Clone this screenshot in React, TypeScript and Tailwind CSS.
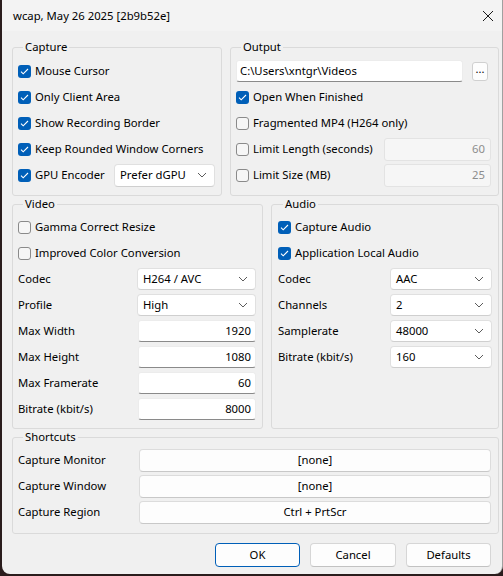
import React from "react";

function Chevron() {
  return (
    <svg width="10" height="6" viewBox="0 0 10 6" fill="none">
      <path d="M1 1l4 4 4-4" stroke="#5c5c5c" strokeWidth="1" />
    </svg>
  );
}

function Check({ checked, label }: { checked?: boolean; label: string }) {
  return (
    <div className="flex h-[26px] items-center gap-[4px]">
      {checked ? (
        <span className="flex h-[13px] w-[13px] shrink-0 items-center justify-center rounded-[3px] bg-[#005fb8]">
          <svg width="9" height="7" viewBox="0 0 9 7" fill="none">
            <path d="M1 3.6l2.2 2.2L8 1" stroke="white" strokeWidth="1.1" />
          </svg>
        </span>
      ) : (
        <span className="h-[13px] w-[13px] shrink-0 rounded-[3px] border border-[#8a8a8a] bg-[#f6f6f6]" />
      )}
      <span className="whitespace-nowrap">{label}</span>
    </div>
  );
}

function Select({ value, className }: { value: string; className: string }) {
  return (
    <div
      className={
        "flex h-[22px] items-center justify-between rounded-[4px] border border-[#e0e0e0] border-b-[#cfcfcf] bg-white pl-[5px] pr-[7px] " +
        className
      }
    >
      <span>{value}</span>
      <Chevron />
    </div>
  );
}

function Field({ value }: { value: string }) {
  return (
    <div className="flex h-[22px] w-[118px] items-center justify-end rounded-[3px] border border-[#ececec] border-b-[#8a8a8a] bg-white pr-[4px]">
      {value}
    </div>
  );
}

function Disabled({ value }: { value: string }) {
  return (
    <div className="flex h-[23px] w-[107px] items-center justify-end rounded-[3px] border border-[#e3e3e3] bg-[#f6f6f6] pr-[5px] text-[#8d8d8d]">
      {value}
    </div>
  );
}

function Row({ label, children }: { label: string; children: React.ReactNode }) {
  return (
    <div className="flex h-[26px] items-center justify-between">
      <span className="whitespace-nowrap">{label}</span>
      {children}
    </div>
  );
}

function Group({ title, className, children }: { title: string; className: string; children: React.ReactNode }) {
  return (
    <fieldset className={"rounded-[3px] border border-[#dadada] " + className}>
      <legend className="ml-[5px] px-[2px] leading-[16px]">{title}</legend>
      {children}
    </fieldset>
  );
}

export default function App() {
  return (
    <div className="h-[576px] w-[503px] overflow-hidden bg-[#2a1c1c] font-['Noto_Sans','Open_Sans',sans-serif] text-[11.3px] text-black">
      <div className="ml-[2px] h-[574px] w-[501px] overflow-hidden rounded-b-[8px] border-r border-[#a0a0a0] bg-[#f0f0f0]">
        <div className="flex h-[31px] items-center justify-between bg-[#f3f3f3] pl-[11px] pr-[8px] pt-[1px]">
          <span>wcap, May 26 2025 [2b9b52e]</span>
          <svg width="12" height="12" viewBox="0 0 12 12" fill="none">
            <path d="M1 1l10 10M11 1L1 11" stroke="#1a1a1a" strokeWidth="1" />
          </svg>
        </div>

        <div className="flex flex-col pl-[10px]">
          <div className="mt-[8px] flex gap-[8px]">
            <Group title="Capture" className="w-[210px] pb-[7px] pl-[5px] pr-[6px] pt-[3px]">
              <Check checked label="Mouse Cursor" />
              <Check checked label="Only Client Area" />
              <Check checked label="Show Recording Border" />
              <Check checked label="Keep Rounded Window Corners" />
              <div className="flex h-[26px] items-center justify-between">
                <Check checked label="GPU Encoder" />
                <Select value="Prefer dGPU" className="h-[23px] w-[101px]" />
              </div>
            </Group>
            <Group title="Output" className="w-[269px] pb-[7px] pl-[5px] pr-[7px] pt-[3px]">
              <div className="flex h-[26px] items-center">
                <div className="flex h-[22px] w-[227px] items-center rounded-[3px] border border-[#ececec] border-b-[#8a8a8a] bg-white pl-[3px]">
                  C:\Users\xntgr\Videos
                </div>
                <div className="ml-[9px] flex h-[19px] w-[16px] items-center justify-center rounded-[3px] border border-[#d0d0d0] bg-[#fdfdfd] pb-[4px] text-[11px]">
                  ...
                </div>
              </div>
              <Check checked label="Open When Finished" />
              <Check label="Fragmented MP4 (H264 only)" />
              <div className="flex h-[26px] items-center justify-between">
                <Check label="Limit Length (seconds)" />
                <Disabled value="60" />
              </div>
              <div className="flex h-[26px] items-center justify-between">
                <Check label="Limit Size (MB)" />
                <Disabled value="25" />
              </div>
            </Group>
          </div>

          <div className="flex gap-[8px]">
            <Group title="Video" className="w-[251px] pb-[6px] pl-[5px] pr-[6px] pt-[2px]">
              <Check label="Gamma Correct Resize" />
              <Check label="Improved Color Conversion" />
              <Row label="Codec">
                <Select value="H264 / AVC" className="w-[119px]" />
              </Row>
              <Row label="Profile">
                <Select value="High" className="w-[119px]" />
              </Row>
              <Row label="Max Width">
                <Field value="1920" />
              </Row>
              <Row label="Max Height">
                <Field value="1080" />
              </Row>
              <Row label="Max Framerate">
                <Field value="60" />
              </Row>
              <Row label="Bitrate (kbit/s)">
                <Field value="8000" />
              </Row>
            </Group>
            <Group title="Audio" className="w-[228px] pb-[6px] pl-[6px] pr-[6px] pt-[2px]">
              <Check checked label="Capture Audio" />
              <Check checked label="Application Local Audio" />
              <Row label="Codec">
                <Select value="AAC" className="w-[102px]" />
              </Row>
              <Row label="Channels">
                <Select value="2" className="w-[102px]" />
              </Row>
              <Row label="Samplerate">
                <Select value="48000" className="w-[102px]" />
              </Row>
              <Row label="Bitrate (kbit/s)">
                <Select value="160" className="w-[102px]" />
              </Row>
            </Group>
          </div>

          <Group title="Shortcuts" className="w-[487px] pb-[8px] pl-[5px] pr-[7px] pt-[2px]">
            {[
              ["Capture Monitor", "[none]"],
              ["Capture Window", "[none]"],
              ["Capture Region", "Ctrl + PrtScr"],
            ].map(([label, key]) => (
              <Row key={label} label={label}>
                <div className="flex h-[23px] w-[352px] items-center justify-center rounded-[4px] border border-[#dcdcdc] border-b-[#c8c8c8] bg-[#fdfdfd]">
                  {key}
                </div>
              </Row>
            ))}
          </Group>

          <div className="mt-[9px] flex w-[487px] justify-end gap-[10px] pr-[8px]">
            <div className="flex h-[24px] w-[85px] items-center justify-center rounded-[4px] border border-[#005fb8] bg-[#fdfdfd]">
              OK
            </div>
            <div className="flex h-[24px] w-[86px] items-center justify-center rounded-[4px] border border-[#d6d6d6] border-b-[#c2c2c2] bg-[#fdfdfd]">
              Cancel
            </div>
            <div className="flex h-[24px] w-[85px] items-center justify-center rounded-[4px] border border-[#d6d6d6] border-b-[#c2c2c2] bg-[#fdfdfd]">
              Defaults
            </div>
          </div>
        </div>
      </div>
    </div>
  );
}
